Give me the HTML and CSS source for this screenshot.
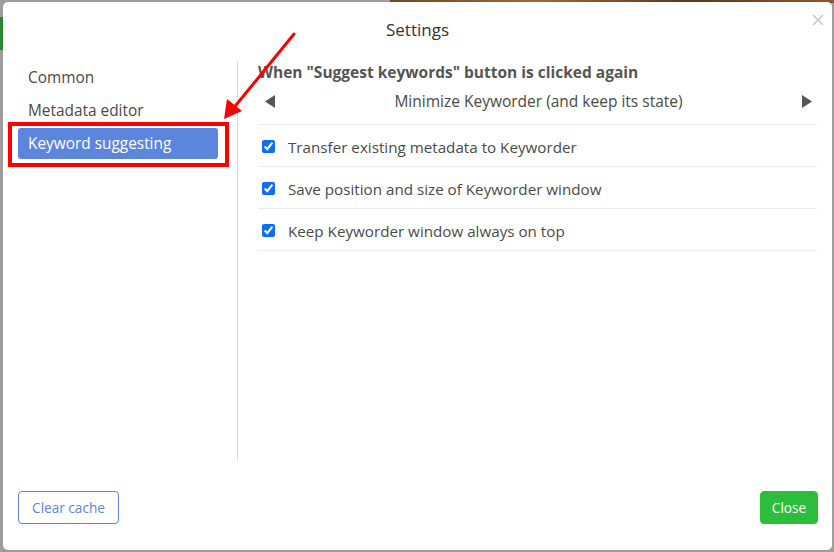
FILE: index.html
```html
<!DOCTYPE html>
<html lang="en">
<head>
<meta charset="utf-8">
<title>Settings</title>
<link rel="stylesheet" href="styles.css">
</head>
<body>
<div class="backdrop-green"></div>
<div class="backdrop-brown"></div>
<div class="modal">
  <header class="modal-header">
    <h1 class="modal-title">Settings</h1>
    <button class="close-x" aria-label="Close">
      <svg width="12" height="12" viewBox="0 0 12 12"><path d="M1 1L11 11M11 1L1 11" stroke="#c8c8c8" stroke-width="1.6" fill="none"/></svg>
    </button>
  </header>
  <div class="modal-body">
    <nav class="sidebar">
      <div class="nav-item">Common</div>
      <div class="nav-item">Metadata editor</div>
      <div class="nav-item active">Keyword suggesting</div>
    </nav>
    <section class="content">
      <div class="section-heading">When "Suggest keywords" button is clicked again</div>
      <div class="selector-row">
        <svg class="arrow-btn" width="10" height="13" viewBox="0 0 10 13"><path d="M10 0L0 6.5L10 13Z" fill="#555"/></svg>
        <span class="selector-value">Minimize Keyworder (and keep its state)</span>
        <svg class="arrow-btn" width="10" height="13" viewBox="0 0 10 13"><path d="M0 0L10 6.5L0 13Z" fill="#555"/></svg>
      </div>
      <label class="check-row"><input type="checkbox" checked><span>Transfer existing metadata to Keyworder</span></label>
      <label class="check-row"><input type="checkbox" checked><span>Save position and size of Keyworder window</span></label>
      <label class="check-row"><input type="checkbox" checked><span>Keep Keyworder window always on top</span></label>
    </section>
  </div>
  <footer class="modal-footer">
    <button class="btn btn-outline">Clear cache</button>
    <button class="btn btn-success">Close</button>
  </footer>
</div>
<div class="annotation-box"></div>
<svg class="annotation-arrow" width="834" height="552" viewBox="0 0 834 552">
  <line x1="294" y1="34" x2="232" y2="110" stroke="#ff0000" stroke-width="3" stroke-linecap="round"/>
  <path d="M224 119L227 99L242 111Z" fill="#ff0000"/>
</svg>
</body>
</html>
```

FILE: styles.css
```css
* { box-sizing: border-box; }
html, body { margin: 0; padding: 0; }
body {
  width: 834px;
  height: 552px;
  overflow: hidden;
  background: #9d9d9d;
  font-family: "Open Sans", "Noto Sans", "Liberation Sans", sans-serif;
  position: relative;
  padding: 2px 2px 2px 3px;
}
.backdrop-green {
  position: absolute; left: 0; top: 17px; width: 4px; height: 33px; background: #248a2f;
}
.backdrop-brown {
  position: absolute; right: 0; top: 0; width: 444px; height: 3px;
  background: linear-gradient(90deg, #6b4a2a, #9a6a3c, #5a3820, #8a5a30);
}
.modal {
  position: relative;
  width: 829px;
  height: 548px;
  background: #ffffff;
  border-radius: 5px;
  display: flex;
  flex-direction: column;
}
.modal-header {
  height: 59px;
  display: flex;
  align-items: center;
  justify-content: center;
}
.modal-title {
  margin: -4px 0 0 0;
  font-size: 17px;
  font-weight: 400;
  color: #333;
  line-height: 20px;
}
.close-x {
  position: absolute;
  right: 8px;
  top: 12px;
  border: none;
  background: none;
  padding: 0;
  width: 12px;
  height: 12px;
  display: flex;
}
.modal-body {
  height: 400px;
  display: flex;
}
.sidebar {
  width: 235px;
  border-right: 1px solid #dcdcdc;
  padding: 1px 19px 0 15px;
  display: flex;
  flex-direction: column;
  gap: 2px;
}
.nav-item {
  height: 31px;
  line-height: 31px;
  padding-left: 10px;
  font-size: 15.4px;
  color: #4a4a4a;
  border-radius: 3px;
}
.nav-item.active {
  background: #5c85dd;
  color: #fff;
}
.content {
  flex: 1;
  padding: 1px 15px 0 20px;
  display: flex;
  flex-direction: column;
}
.section-heading {
  font-size: 15.5px;
  font-weight: 700;
  color: #555;
  line-height: 20px;
}
.selector-row {
  display: flex;
  align-items: center;
  justify-content: space-between;
  padding: 8px 5px 12px 7px;
  border-bottom: 1px solid #ececec;
}
.selector-value {
  font-size: 15.5px;
  line-height: 22px;
  color: #4a4a4a;
}
.arrow-btn { display: block; }
.check-row {
  display: flex;
  align-items: center;
  height: 42px;
  padding-top: 2px;
  border-bottom: 1px solid #ececec;
  font-size: 15.2px;
  color: #4a4a4a;
}
.check-row input {
  width: 13px;
  height: 13px;
  margin: 0 13px 0 4px;
  accent-color: #0b6ff5;
}
.modal-footer {
  flex: 1;
  display: flex;
  justify-content: space-between;
  align-items: flex-start;
  padding: 30px 14px 0 15px;
}
.btn {
  height: 33px;
  border-radius: 4px;
  font-family: inherit;
  font-size: 13.6px;
  padding: 0;
  white-space: nowrap;
  cursor: pointer;
}
.btn-outline {
  width: 101px;
  background: #fff;
  border: 1px solid #5c85dd;
  color: #5c85dd;
}
.btn-success {
  width: 58px;
  background: #2cbd3c;
  border: 1px solid #2cbd3c;
  color: #fff;
}
.annotation-box {
  position: absolute;
  left: 8px;
  top: 122px;
  width: 221px;
  height: 45px;
  border: 4px solid #ff0000;
}
.annotation-arrow {
  position: absolute;
  left: 0;
  top: 0;
  pointer-events: none;
}
```
